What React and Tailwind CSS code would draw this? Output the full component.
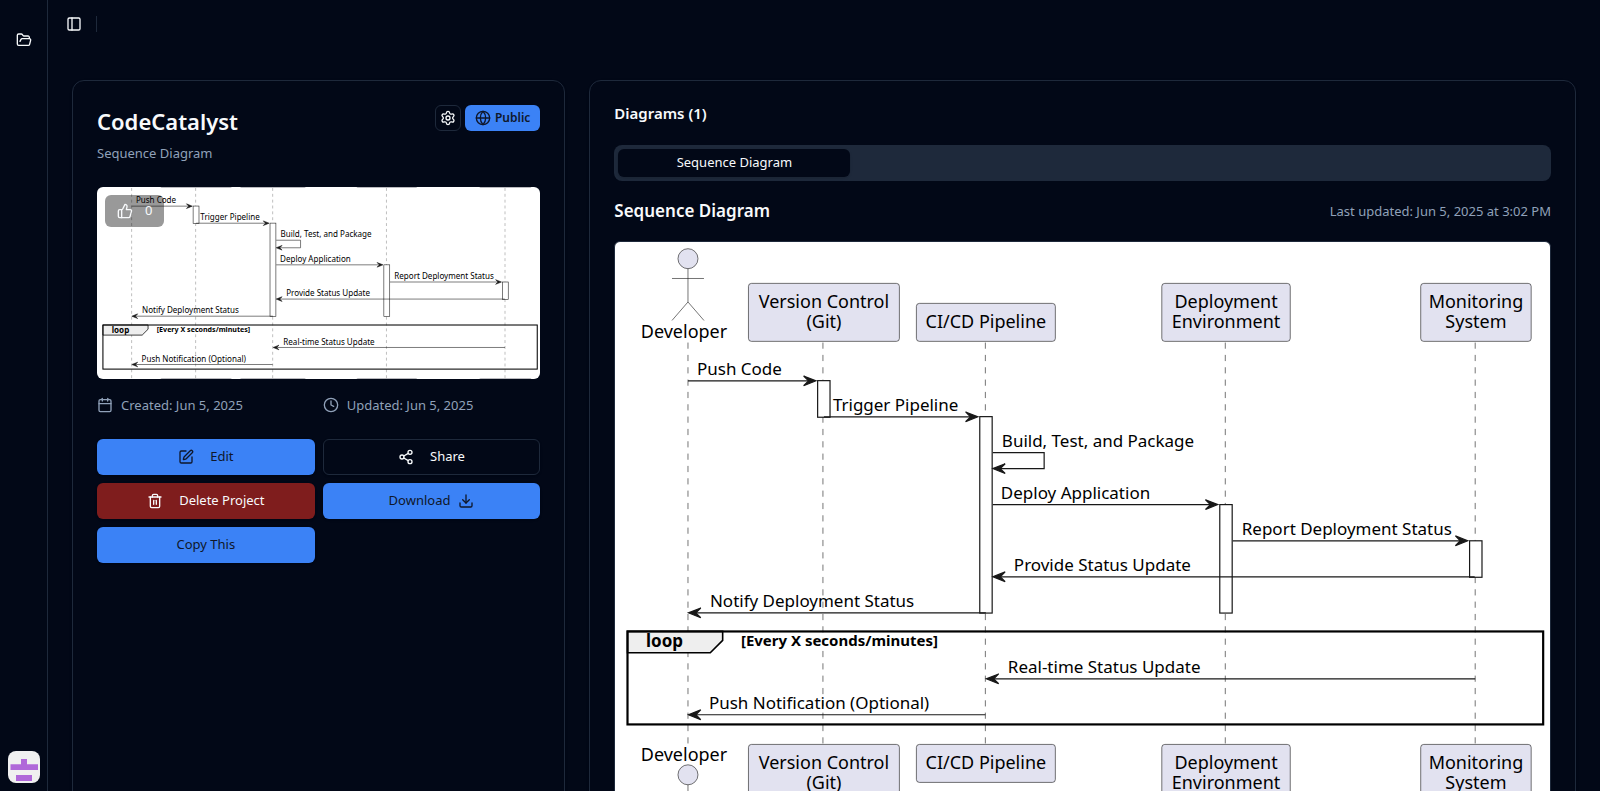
import { FolderOpen, PanelLeft, Settings, Globe, ThumbsUp, Calendar, Clock, SquarePen, Share2, Trash2, Download } from "lucide-react";

const participants = [
  { x: 208, left: 133.5, width: 151, lines: ["Version Control", "(Git)"] },
  { x: 370.5, left: 301.5, width: 139, lines: ["CI/CD Pipeline"] },
  { x: 610.5, left: 547, width: 128.5, lines: ["Deployment", "Environment"] },
  { x: 860.5, left: 806, width: 110.5, lines: ["Monitoring", "System"] },
];

const activations = [
  { x: 202.7, y: 138.7, h: 36.6 },
  { x: 364.9, y: 174.7, h: 196.5 },
  { x: 605, y: 262.7, h: 108.5 },
  { x: 854.9, y: 298.9, h: 36.5 },
];

const messages = [
  { from: 73, to: 201, y: 138.9, label: "Push Code", x: 82 },
  { from: 209, to: 363, y: 174.9, label: "Trigger Pipeline", x: 218 },
  { from: 378, to: 603, y: 262.7, label: "Deploy Application", x: 386 },
  { from: 618, to: 853, y: 298.9, label: "Report Deployment Status", x: 627 },
  { from: 860, to: 378, y: 334.9, label: "Provide Status Update", x: 399 },
  { from: 371, to: 73.5, y: 371, label: "Notify Deployment Status", x: 95 },
  { from: 860.5, to: 371.5, y: 437, label: "Real-time Status Update", x: 393 },
  { from: 370.5, to: 73.5, y: 472.9, label: "Push Notification (Optional)", x: 94 },
];

function ArrowHead({ x, y, dir }) {
  const back = x - 12.3 * dir;
  return (
    <polygon
      points={`${back},${y - 4.9} ${x},${y} ${back},${y + 4.9} ${x - 7.4 * dir},${y}`}
      fill="#181818"
      stroke="#181818"
      strokeWidth="1.2"
    />
  );
}

function Actor({ y, labelY, labelled }) {
  return (
    <g>
      {labelled && (
        <text x="69" y={labelY} fontSize="18" textAnchor="middle">
          Developer
        </text>
      )}
      <g stroke="#181818" strokeWidth="0.6" fill="none">
        <circle cx="73" cy={y} r="10" fill="#e2e2f0" />
        <path d={`M73 ${y + 10}v33.3M57 ${y + 19.8}h32M73 ${y + 43.3}l-16 18.5M73 ${y + 43.3}l16 18.5`} />
      </g>
    </g>
  );
}

function Participants({ bottom, labelled }) {
  return participants.map((p) => {
    const h = p.lines.length === 2 ? 58 : 38;
    const top = bottom ? 502.6 : 99.4 - h;
    return (
      <g key={p.x}>
        <rect x={p.left} y={top} width={p.width} height={h} rx="3" fill="#e2e2f0" stroke="#181818" strokeWidth="0.6" />
        {labelled &&
          p.lines.map((line, i) => (
            <text key={line} x={p.left + p.width / 2} y={top + 24.6 + i * 20.2} fontSize="18" textAnchor="middle">
              {line}
            </text>
          ))}
      </g>
    );
  });
}

function SequenceDiagram({ className, preserveAspectRatio, labelled = false }) {
  return (
    <svg
      viewBox="0 0 935 602"
      preserveAspectRatio={preserveAspectRatio}
      role="img"
      aria-label="Sequence Diagram"
      className={className}
      fontFamily='"Noto Sans", sans-serif'
      fontSize="17"
      fill="#000"
    >
      {[73, 208, 370.5, 610.5, 860.5].map((x) => (
        <line key={x} x1={x} x2={x} y1="100.6" y2="502" stroke="#181818" strokeWidth="0.6" strokeDasharray="6.17 6.17" />
      ))}
      {activations.map((a) => (
        <rect key={a.x} x={a.x} y={a.y} width="12.4" height={a.h} fill="#fff" stroke="#181818" strokeWidth="1.2" />
      ))}
      <Actor y={16.7} labelY={95.6} labelled={labelled} />
      <Participants labelled={labelled} />
      <Actor y={533} labelY={519} labelled={labelled} />
      <Participants bottom labelled={labelled} />
      <path d="M12.5 389.5h95.2v9l-12.4 12.4H12.5z" fill="#eee" stroke="#000" strokeWidth="1.6" />
      <rect x="12.5" y="389.6" width="916" height="93" fill="none" stroke="#000" strokeWidth="2.2" />
      <text x="31" y="405.6" fontWeight="700">loop</text>
      <text x="126" y="404.6" fontSize="15" fontWeight="700">[Every X seconds/minutes]</text>
      {messages.map((m) => (
        <g key={m.label}>
          <line x1={m.from} x2={m.to - Math.sign(m.to - m.from) * 5} y1={m.y} y2={m.y} stroke="#181818" strokeWidth="1.2" />
          <ArrowHead x={m.to} y={m.y} dir={Math.sign(m.to - m.from)} />
          <text x={m.x} y={m.y - 6}>{m.label}</text>
        </g>
      ))}
      <path d="M378 210.8h51.3v15.9H383" fill="none" stroke="#181818" strokeWidth="1.2" />
      <ArrowHead x={378} y={226.7} dir={-1} />
      <text x="387" y="204.8">Build, Test, and Package</text>
    </svg>
  );
}

const buttonBase = "flex h-9 items-center justify-center rounded-md text-[13px] shadow-sm";
const primary = "bg-[#3b82f6] text-[#0f172a]";

export default function App() {
  return (
    <div className="flex h-screen overflow-hidden bg-[#020817] font-['Noto_Sans',sans-serif] text-slate-50">
      <nav aria-label="Main" className="flex w-12 shrink-0 flex-col items-center justify-between border-r border-[#1e293b] pt-6 pb-2">
        <a href="#projects" aria-label="Projects" className="flex size-8 items-center justify-center">
          <FolderOpen size={16} />
        </a>
        <button type="button" aria-label="Account" className="size-8 overflow-hidden rounded-lg">
          <svg viewBox="0 0 32 32" className="size-8">
            <rect width="32" height="32" fill="#f0f0f0" />
            <path d="M13 8h6v5.300h11v5.700H2.500v-5.700H13zM8 24h16v6H8z" fill="#b068d9" />
          </svg>
        </button>
      </nav>
      <div className="flex min-w-0 flex-1 flex-col overflow-y-auto [scrollbar-width:none]">
        <header className="flex h-12 shrink-0 items-center gap-2 px-3">
          <button type="button" aria-label="Toggle sidebar" className="flex size-7 items-center justify-center">
            <PanelLeft size={16} />
          </button>
          <div className="h-4 w-px bg-[#1e293b]" />
        </header>
        <main className="grid grid-cols-[1fr_2fr] gap-6 px-6 pt-8 pb-6">
          <section className="rounded-xl border border-[#1e293b] p-6 shadow-sm">
            <div className="flex items-start justify-between">
              <h1 className="text-[22px] leading-8 font-semibold">CodeCatalyst</h1>
              <div className="flex gap-1">
                <button type="button" aria-label="Project settings" className="flex size-[26px] items-center justify-center rounded-md border border-[#1e293b]">
                  <Settings size={16} />
                </button>
                <button type="button" className="flex h-[26px] items-center gap-1 rounded-md bg-[#3b82f6] px-2.5 text-xs font-semibold text-[#0f172a]">
                  <Globe size={16} />
                  Public
                </button>
              </div>
            </div>
            <p className="mt-1.5 text-[13px] leading-5 text-slate-400">Sequence Diagram</p>
            <div className="relative mt-6 h-48 overflow-hidden rounded-md bg-white">
              <SequenceDiagram className="size-full" preserveAspectRatio="xMidYMid slice" />
              <button type="button" aria-label="Like" className="absolute top-2 left-2 flex h-8 items-center gap-3 rounded-md bg-black/40 px-3 text-[13px] text-slate-50">
                <ThumbsUp size={16} />
                0
              </button>
            </div>
            <div className="mt-4 grid grid-cols-2 gap-2 text-[13px] leading-5 text-slate-400">
              <div className="flex items-center gap-2">
                <Calendar size={16} />
                Created: Jun 5, 2025
              </div>
              <div className="flex items-center gap-2">
                <Clock size={16} />
                Updated: Jun 5, 2025
              </div>
            </div>
            <div className="mt-6 grid grid-cols-2 gap-2">
              <button type="button" className={`${buttonBase} gap-4 ${primary}`}>
                <SquarePen size={16} />
                Edit
              </button>
              <button type="button" className={`${buttonBase} gap-4 border border-[#1e293b]`}>
                <Share2 size={16} />
                Share
              </button>
              <button type="button" className={`${buttonBase} gap-4 bg-[#7f1d1d]`}>
                <Trash2 size={16} />
                Delete Project
              </button>
              <button type="button" className={`${buttonBase} gap-2 ${primary}`}>
                Download
                <Download size={16} />
              </button>
              <button type="button" className={`${buttonBase} ${primary}`}>Copy This</button>
            </div>
          </section>
          <section className="rounded-xl border border-[#1e293b] p-6 shadow-sm">
            <h2 className="text-[15px] leading-4 font-semibold">Diagrams (1)</h2>
            <div role="tablist" className="mt-6 grid h-9 grid-cols-4 rounded-lg bg-[#1e293b] p-1">
              <button type="button" role="tab" aria-selected="true" className="rounded-md bg-[#020817] text-[13px] shadow-sm">
                Sequence Diagram
              </button>
            </div>
            <div className="mt-4 flex items-center justify-between">
              <h3 className="text-[17px] leading-7 font-semibold">Sequence Diagram</h3>
              <p className="text-[13px] leading-5 text-slate-400">Last updated: Jun 5, 2025 at 3:02 PM</p>
            </div>
            <div className="mt-4 overflow-hidden rounded-md border border-[#1e293b] bg-white">
              <SequenceDiagram className="block w-full" labelled />
            </div>
          </section>
        </main>
      </div>
    </div>
  );
}
